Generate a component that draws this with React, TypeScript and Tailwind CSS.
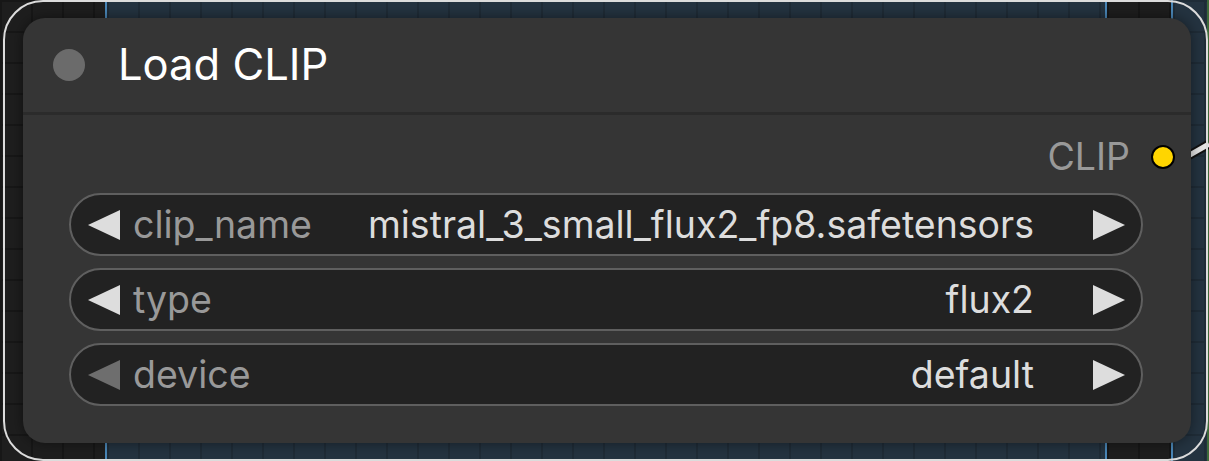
import React from 'react';

const widgets = [
  { name: 'clip_name', value: 'mistral_3_small_flux2_fp8.safetensors', disabledLeft: false },
  { name: 'type', value: 'flux2', disabledLeft: false },
  { name: 'device', value: 'default', disabledLeft: true },
];

const gridDark =
  'bg-[#1e1e1e] bg-[linear-gradient(to_right,#171717_2px,transparent_2px),linear-gradient(to_bottom,#171717_2px,transparent_2px)] bg-[size:31px_31px]';
const gridBlue =
  'bg-[#243340] bg-[linear-gradient(to_right,#1f2c37_2px,transparent_2px),linear-gradient(to_bottom,#1f2c37_2px,transparent_2px)] bg-[size:31px_31px]';

const Arrow = ({ dir, dim }: { dir: 'left' | 'right'; dim?: boolean }) => (
  <svg width="32" height="30" viewBox="0 0 32 30" className="shrink-0">
    {dir === 'left' ? (
      <polygon points="0,15 32,0 32,30" fill={dim ? '#6e6e6e' : '#dddddd'} />
    ) : (
      <polygon points="32,15 0,0 0,30" fill="#dddddd" />
    )}
  </svg>
);

const Widget = ({ name, value, disabledLeft }: { name: string; value: string; disabledLeft: boolean }) => (
  <div className="flex h-[63px] items-center rounded-full border-2 border-[#5f5f5f] bg-[#222222] pl-[17px] pr-[16px]">
    <Arrow dir="left" dim={disabledLeft} />
    <span className="ml-[13px] text-[#999999]">{name}</span>
    <span className="ml-auto mr-[59px] text-[#dddddd]">{value}</span>
    <Arrow dir="right" />
  </div>
);

const App = () => {
  return (
    <div
      className="relative h-[461px] w-[1209px] overflow-hidden text-[37.5px] leading-none"
      style={{ fontFamily: 'Inter, "Noto Sans", sans-serif' }}
    >
      {/* canvas */}
      <div className="flex h-full w-full">
        <div className={`w-[105px] ${gridDark}`} />
        <div className="w-[2px] bg-[#4a87b8]" />
        <div className={`w-[998px] ${gridBlue}`} />
        <div className="w-[2px] bg-[#4a87b8]" />
        <div className={`w-[64px] ${gridDark}`} />
        <div className="w-[2px] bg-[#4a87b8]" />
        <div className={`flex-1 ${gridBlue}`} />
        <div className="w-[2px] bg-[#3f6b3a]" />
      </div>

      {/* link wire */}
      <svg className="absolute left-[1186px] top-[134px]" width="23" height="30" viewBox="0 0 23 30">
        <line x1="2" y1="22" x2="23" y2="10" stroke="#111" strokeWidth="9" />
        <line x1="2" y1="22" x2="23" y2="10" stroke="#e6e6e6" strokeWidth="5" />
      </svg>

      {/* selection outline */}
      <div className="absolute left-[3px] top-0 h-[461px] w-[1205px] rounded-[40px] border-2 border-[#dcdcdc]" />

      {/* node */}
      <div className="absolute left-[23px] top-[18px] flex h-[425px] w-[1168px] flex-col overflow-hidden rounded-[22px] bg-[#353535] shadow-[0_0_14px_rgba(0,0,0,0.45)]">
        <div className="flex h-[94px] items-center pl-[30px]">
          <div className="h-[32px] w-[32px] rounded-full bg-[#6b6b6b]" />
          <span className="ml-[33px] text-[43.5px] text-white">Load CLIP</span>
        </div>
        <div className="h-[3px] bg-[#2b2b2b]" />
        <div className="flex flex-col pt-[22px]">
          <div className="flex h-[40px] items-center justify-end pr-[16px]">
            <span className="text-[#999999]">CLIP</span>
            <div className="ml-[21px] h-[24px] w-[24px] rounded-full border-2 border-black bg-[#ffd500]" />
          </div>
          <div className="mt-[16px] flex flex-col gap-[12px] pl-[46px] pr-[48px]">
            {widgets.map((w) => (
              <Widget key={w.name} {...w} />
            ))}
          </div>
        </div>
      </div>
    </div>
  );
};

export default App;
